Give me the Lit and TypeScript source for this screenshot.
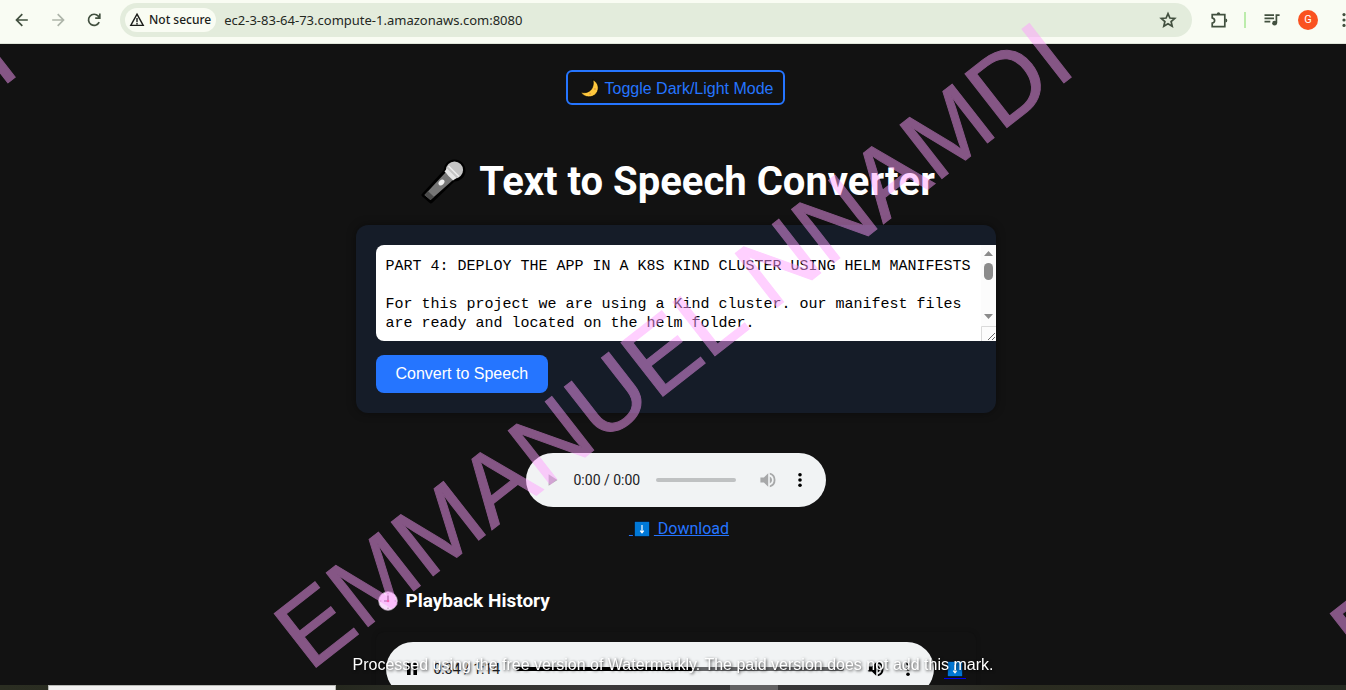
import { LitElement, html, css, svg } from "lit";
import { customElement, property } from "lit/decorators.js";

const icons = {
  back: svg`<path d="M12.3 6.2 6.5 12l5.8 5.8M6.8 12h11" />`,
  forward: svg`<path d="M11.7 6.2l5.8 5.8-5.8 5.8M17.2 12h-11" />`,
  reload: svg`<path d="M17.2 14.2a5.6 5.6 0 1 1-.9-6.1l1.2 1.4M17.8 5.6v4.6h-4.6" />`,
  warning: svg`<path d="M12 6.2 18.2 17.4H5.8Z M12 10v4M12 14.8v1.6" stroke-width="1.4" />`,
  star: svg`<path d="M12 5.6l1.9 4.4 4.8.4-3.6 3.1 1.1 4.7-4.2-2.5-4.2 2.5 1.1-4.7-3.6-3.1 4.8-.4z" />`,
  puzzle: svg`<path d="M5.2 6.6h12.6v12H5.2v-3.4c3.2-.6 3.2-4.8 0-5.4z" /><path d="M9.8 6a1.7 1.7 0 0 1 3.4 0zM18.4 10.6a1.9 1.9 0 0 1 0 3.8z" fill="currentColor" stroke="none" />`,
  media: svg`<path d="M4.5 7.2h9.5M4.5 10.4h9.5M4.5 13.6h5.8M16.4 15.2V7.2h3.2" /><circle cx="14.6" cy="15.2" r="2.4" fill="currentColor" stroke="none" />`,
};

const arrowDown = svg`<rect x="1" y="1" width="18" height="18" fill="#0a0a14" /><rect x="2" y="2" width="16" height="16" fill="#0078d7" /><path d="M10 5.5v8M8 11.8l2 2.4 2-2.4" fill="none" stroke="#fff" stroke-width="1.3" />`;

@customElement("audio-player")
export class AudioPlayer extends LitElement {
  @property({ type: Boolean }) playing = false;
  @property({ type: Boolean }) empty = false;
  @property() elapsed = "0:00";
  @property() total = "0:00";
  @property({ type: Number }) progress = 0;

  static styles = css`
    :host {
      display: block;
    }
    .player {
      display: flex;
      align-items: center;
      box-sizing: border-box;
      height: 54px;
      padding: 0 10px;
      border-radius: 27px;
      background: #f1f3f4;
      color: #000;
      font: 14px/20px Roboto, sans-serif;
    }
    button {
      flex: none;
      width: 32px;
      height: 32px;
      padding: 0;
      border: 0;
      background: none;
      color: inherit;
    }
    button:disabled {
      color: #a7a8a9;
    }
    svg {
      display: block;
      margin: auto;
      width: 20px;
      height: 20px;
      fill: currentColor;
    }
    .time {
      flex: none;
      padding: 0 16px 0 6px;
      color: #202124;
      white-space: nowrap;
    }
    input {
      appearance: none;
      flex: 1;
      min-width: 0;
      height: 4px;
      margin: 0 16px 0 0;
      border-radius: 2px;
      background: linear-gradient(
        90deg,
        #000 var(--progress),
        #666769 var(--progress)
      );
    }
    input:disabled {
      background: #bfc1c2;
    }
    input::-webkit-slider-thumb {
      appearance: none;
      width: 0;
      height: 0;
    }
  `;

  render() {
    return html`
      <div class="player">
        <button aria-label=${this.playing ? "Pause" : "Play"} ?disabled=${this.empty}>
          <svg viewBox="0 0 20 20">
            ${this.playing
              ? svg`<path d="M5 4h3.6v12H5zM11.4 4H15v12h-3.6z" />`
              : svg`<path d="M6.6 4.3v11.4L15.4 10z" />`}
          </svg>
        </button>
        <span class="time">${this.elapsed} / ${this.total}</span>
        <input
          type="range"
          aria-label="Seek"
          ?disabled=${this.empty}
          .value=${String(this.progress)}
          style="--progress: ${this.progress}%"
        />
        <button aria-label="Volume" ?disabled=${this.empty}>
          <svg viewBox="0 0 20 20">
            <path d="M2.4 7.4v5.2h3.5l4.3 4.2V3.2L5.9 7.4zM11.8 6.4v7.2a4 4 0 0 0 0-7.2zM11.8 2.8v1.8a5.7 5.7 0 0 1 0 10.8v1.8a7.4 7.4 0 0 0 0-14.4z" />
          </svg>
        </button>
        <button aria-label="More options">
          <svg viewBox="0 0 20 20">
            <circle cx="10" cy="4.8" r="1.8" /><circle cx="10" cy="10" r="1.8" /><circle cx="10" cy="15.2" r="1.8" />
          </svg>
        </button>
      </div>
    `;
  }
}

@customElement("app-root")
export class AppRoot extends LitElement {
  static styles = css`
    :host {
      position: relative;
      display: flex;
      flex-direction: column;
      height: 100vh;
      overflow: hidden;
      background: #121212;
      color: #fff;
      font: 16px/20px Roboto, sans-serif;
    }
    button {
      font: 16px/18px "Liberation Sans", Arial, sans-serif;
    }
    .toolbar {
      display: flex;
      flex: none;
      align-items: center;
      box-sizing: border-box;
      height: 44px;
      margin-right: -16px;
      padding: 0 0 4px 4px;
      border-bottom: 1px solid #dfe5d9;
      background: #f9fcf3;
      color: #42503f;
    }
    .tool {
      flex: none;
      width: 36px;
      height: 36px;
      padding: 6px;
      border: 0;
      background: none;
      color: inherit;
    }
    .tool:disabled {
      color: #aeb5a9;
    }
    .glyph {
      display: block;
      width: 24px;
      height: 24px;
      fill: none;
      stroke: currentColor;
      stroke-width: 1.7;
    }
    .address {
      display: flex;
      flex: 1;
      align-items: center;
      box-sizing: border-box;
      height: 34px;
      margin: 0 9px 0 8px;
      padding: 0 6px 0 5px;
      border-radius: 17px;
      background: #e3ecdc;
    }
    .chip {
      display: flex;
      align-items: center;
      height: 24px;
      padding: 0 5px 0 0;
      border: 0;
      border-radius: 12px;
      background: #f9fcf3;
      color: #1b1d1a;
      font: 500 12px/24px "Noto Sans", sans-serif;
    }
    .url {
      flex: 1;
      min-width: 0;
      margin: 0 0 0 8px;
      padding: 0;
      border: 0;
      outline: 0;
      background: none;
      color: #23281f;
      font: 13px/20px "Noto Sans", sans-serif;
    }
    .divider {
      flex: none;
      width: 2px;
      height: 16px;
      margin: 0 8px 0 7px;
      background: #bcecab;
    }
    .avatar {
      flex: none;
      width: 20px;
      height: 20px;
      margin: 0 8px;
      padding: 0;
      border: 0;
      border-radius: 10px;
      background: #fa5220;
      color: #fff;
      font: 11px/20px Roboto, sans-serif;
    }
    .page {
      display: flex;
      flex: 1;
      flex-direction: column;
      align-items: center;
      min-height: 0;
      overflow: hidden;
      margin-right: -5px;
      padding-top: 26px;
    }
    .page > * {
      flex: none;
    }
    .toggle {
      display: flex;
      align-items: center;
      gap: 4px;
      box-sizing: border-box;
      height: 35px;
      padding: 2px 10px 0 11px;
      border: 2px solid #2575ff;
      border-radius: 6px;
      background: none;
      color: #2575ff;
    }
    .emoji {
      display: block;
      width: 20px;
      height: 20px;
    }
    .toggle .emoji {
      width: 22px;
      height: 22px;
    }
    h1 {
      display: flex;
      align-items: center;
      gap: 13px;
      margin: 53px 0 19px;
      padding-left: 4px;
      font: 700 40px/48px Roboto, sans-serif;
    }
    .mic {
      width: 46px;
      height: 46px;
      margin-bottom: 2px;
    }
    .card {
      box-sizing: border-box;
      width: 640px;
      max-width: 100%;
      padding: 20px;
      border-radius: 12px;
      background: #151c28;
      box-shadow: 0 0 10px rgba(0, 0, 0, 0.4);
    }
    .field {
      position: relative;
      width: 100%;
      margin-bottom: 14px;
      padding-right: 20px;
    }
    textarea {
      display: block;
      width: 100%;
      height: 76px;
      margin: 0;
      padding: 12px 10px 8px;
      border: 0;
      border-radius: 8px 0 0 8px;
      outline: 0;
      background: #fff;
      color: #000;
      font: 15px/19px "Liberation Mono", monospace;
      overflow-y: scroll;
      resize: none;
    }
    .scrollbar {
      position: absolute;
      top: 0;
      right: 0;
      display: block;
      width: 15px;
      height: 96px;
      background: #fcfcfc;
    }
    .convert {
      display: block;
      height: 38px;
      padding: 0 20px;
      border: 0;
      border-radius: 8px;
      background: #2575ff;
      color: #fff;
    }
    .current {
      width: 300px;
      margin-top: 40px;
    }
    .download {
      display: flex;
      align-items: center;
      margin: 12px 0 0 7px;
      color: #2575ff;
    }
    .download .emoji,
    .item .emoji {
      width: 18px;
      height: 18px;
    }
    .download .emoji {
      margin-right: 3px;
    }
    .item .emoji {
      margin: 0 2px;
    }
    .history {
      width: 600px;
      max-width: 100%;
      margin-top: 50px;
    }
    h2 {
      display: flex;
      align-items: center;
      gap: 8px;
      margin: 0 0 19px;
      padding-left: 2px;
      font: 700 19px/24px Roboto, sans-serif;
    }
    .item {
      display: flex;
      align-items: center;
      gap: 10px;
      padding: 10px;
      border-radius: 8px;
      background: #121212;
      box-shadow: 0 0 5px rgba(0, 0, 0, 0.2);
    }
    .item audio-player {
      flex: 1;
    }
    .item a {
      border-bottom: 1px solid #0000ee;
    }
    .taskbar {
      flex: none;
      display: flex;
      height: 5px;
      padding-left: 48px;
      background: linear-gradient(90deg, #2b2e22, #25281e 25%, #3a3839 45%, #353536 65%, #2b2c20 76%, #262a22);
    }
    .window {
      box-sizing: border-box;
      width: 288px;
      border: 1px solid #b9bab6;
      border-bottom: 0;
      background: #f1f1f0;
    }
    .active {
      width: 48px;
      margin-left: 394px;
      background: #626162;
    }
    .overlay {
      position: absolute;
      inset: 0;
      overflow: hidden;
      pointer-events: none;
    }
    .mark {
      position: absolute;
      top: 585px;
      left: var(--mark-x);
      color: #ff9eff;
      font: 99px/99px "Liberation Sans", Arial, sans-serif;
      white-space: nowrap;
      opacity: 0.485;
      -webkit-text-stroke: 1px #ff9eff;
      transform: rotate(-38deg);
      transform-origin: 0 100%;
    }
    .notice {
      position: absolute;
      right: 0;
      bottom: 15px;
      left: 0;
      margin: 0;
      color: #fff;
      font: 16px/20px "Liberation Sans", Arial, sans-serif;
      text-align: center;
      text-shadow: 1px 1px 3px rgba(0, 0, 0, 0.8);
    }
  `;

  private text = `PART 4: DEPLOY THE APP IN A K8S KIND CLUSTER USING HELM MANIFESTS

For this project we are using a Kind cluster. our manifest files are ready and located on the helm folder.







`;

  private tool(label: string, shape: unknown, disabled = false) {
    return html`<button class="tool" aria-label=${label} ?disabled=${disabled}>
      <svg class="glyph" viewBox="0 0 24 24">${shape}</svg>
    </button>`;
  }

  render() {
    return html`
      <header class="toolbar">
        ${this.tool("Back", icons.back)}
        ${this.tool("Forward", icons.forward, true)}
        ${this.tool("Reload", icons.reload)}
        <div class="address">
          <button class="chip">
            <svg class="glyph" viewBox="0 0 24 24">${icons.warning}</svg>
            Not secure
          </button>
          <input class="url" aria-label="Address" value="ec2-3-83-64-73.compute-1.amazonaws.com:8080" />
          ${this.tool("Bookmark", icons.star)}
        </div>
        ${this.tool("Extensions", icons.puzzle)}
        <span class="divider"></span>
        ${this.tool("Media", icons.media)}
        <button class="avatar">G</button>
        ${this.tool(
          "Menu",
          svg`<g fill="currentColor" stroke="none"><circle cx="12" cy="6.600" r="1.600" /><circle cx="12" cy="12" r="1.600" /><circle cx="12" cy="17.400" r="1.600" /></g>`
        )}
      </header>

      <main class="page">
        <button class="toggle">
          <svg class="emoji" viewBox="0 0 20 20" aria-hidden="true">
            <path d="M12.600 1.800c5 2 6.400 8.200 3 12.400-3.600 4.100-10.600 4-14-1.200 4.800 1.200 8.800-.6 10.400-4 1.100-2.300 1.300-4.800.6-7.200z" fill="#ffc83d" stroke="#000" stroke-width=".6" />
            <circle cx="14.500" cy="10" r=".8" fill="#e19747" /><circle cx="10" cy="14.400" r=".8" fill="#e19747" />
          </svg>
          Toggle Dark/Light Mode
        </button>

        <h1>
          <svg class="mic" viewBox="0 0 46 46" aria-hidden="true">
            <path d="M3 37 25 13a9.500 9.500 0 1 1 9 9L11 44z" fill="#000" stroke="#000" stroke-width="3" stroke-linejoin="round" />
            <path d="M4.500 37 25.500 14.500l7.500 7.500L10.500 42z" fill="#767676" />
            <path d="M4.500 37 8 33.200l6 5.600L10.500 42z" fill="#4b4b4b" />
            <circle cx="34.500" cy="12" r="8.600" fill="#c4c4c4" />
            <path d="M24.500 13.500 27 10.500l9.500 9.500-3.500 2.500z" fill="#e6e6e6" />
            <path d="m28.500 8 10.500 10.500" stroke="#ededed" stroke-width="1.500" />
            <ellipse cx="21.500" cy="24.500" rx="3.400" ry="2.400" transform="rotate(-45 21.500 24.500)" fill="#f0f0f0" />
          </svg>
          Text to Speech Converter
        </h1>

        <section class="card">
          <div class="field">
            <textarea aria-label="Text to convert" .value=${this.text}></textarea>
            <svg class="scrollbar" viewBox="0 0 15 96" aria-hidden="true">
              <path d="M3 11h9L7.500 6zM3 69h9l-4.500 5z" fill="#8b8b8b" />
              <rect x="3" y="18" width="9" height="17" rx="4.500" fill="#8b8b8b" />
              <path d="M.5 96V81.500H15" fill="none" stroke="#dadada" />
              <path d="m7 95 7-7M11 95l3-3" fill="none" stroke="#555" stroke-width=".9" />
            </svg>
          </div>
          <button class="convert">Convert to Speech</button>
        </section>

        <audio-player class="current" empty></audio-player>
        <a class="download" href="#download">
          <span>&nbsp;</span>
          <svg class="emoji" viewBox="0 0 20 20" aria-hidden="true">${arrowDown}</svg>
          <span>&nbsp;Download</span>
        </a>

        <section class="history">
          <h2>
            <svg class="emoji" viewBox="0 0 20 20" aria-hidden="true">
              <circle cx="10" cy="10" r="9.300" fill="#f8dcfa" stroke="#b9a9bb" stroke-width=".8" />
              <path d="M10 4.500V10H6" fill="none" stroke="#5c3a5c" stroke-width="1.200" />
              <circle cx="10" cy="10" r="1.300" fill="#e8306a" />
              <path d="M10 2v1.400M10 16.600V18M16.600 10H18M2 10h1.400" stroke="#b08ab0" />
            </svg>
            Playback History
          </h2>
          <div class="item">
            <audio-player playing elapsed="0:34" total="1:14" progress="54"></audio-player>
            <a href="#history-download" aria-label="Download recording">
              <svg class="emoji" viewBox="0 0 20 20" aria-hidden="true">${arrowDown}</svg>
            </a>
          </div>
        </section>
      </main>

      <footer class="taskbar">
        <span class="window"></span>
        <span class="active"></span>
      </footer>

      <div class="overlay">
        ${[-737, 319, 1375].map(
          (x) => html`<span class="mark" style="--mark-x: ${x}px">EMMANUEL NNAMDI</span>`
        )}
        <p class="notice">
          Processed using the free version of Watermarkly. The paid version does not add this mark.
        </p>
      </div>
    `;
  }
}
